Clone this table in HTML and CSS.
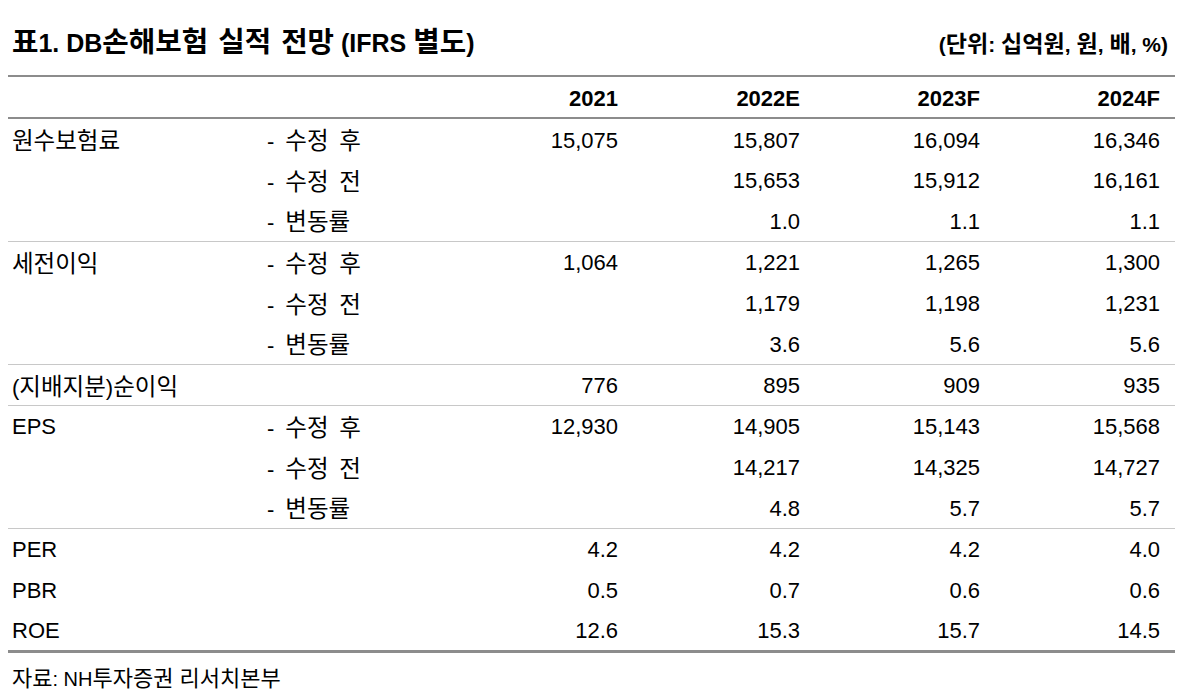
FILE: index.html
```html
<!DOCTYPE html>
<html lang="ko">
<head>
<meta charset="utf-8">
<link rel="stylesheet" href="styles.css">
</head>
<body>
<div class="page">
  <div class="titlebar">
    <h1 class="title"><span class="ko">표</span>1. DB<span class="ko">손해보험 실적 전망</span> (IFRS <span class="ko">별도</span>)</h1>
    <div class="unit">(<span class="ko">단위</span>: <span class="ko">십억원</span>, <span class="ko">원</span>, <span class="ko">배</span>, %)</div>
  </div>
  <table class="tbl">
    <colgroup>
      <col class="c1"><col class="c2"><col class="c3"><col class="c4"><col class="c5"><col class="c6">
    </colgroup>
    <thead>
      <tr><th></th><th></th><th class="num">2021</th><th class="num">2022E</th><th class="num">2023F</th><th class="num">2024F</th></tr>
    </thead>
    <tbody>
      <tr class="grp"><td><span class="ko">원수보험료</span></td><td class="sub">-<span class="ko">수정 후</span></td><td class="num">15,075</td><td class="num">15,807</td><td class="num">16,094</td><td class="num">16,346</td></tr>
      <tr><td></td><td class="sub">-<span class="ko">수정 전</span></td><td class="num"></td><td class="num">15,653</td><td class="num">15,912</td><td class="num">16,161</td></tr>
      <tr><td></td><td class="sub">-<span class="ko">변동률</span></td><td class="num"></td><td class="num">1.0</td><td class="num">1.1</td><td class="num">1.1</td></tr>
      <tr class="grp"><td><span class="ko">세전이익</span></td><td class="sub">-<span class="ko">수정 후</span></td><td class="num">1,064</td><td class="num">1,221</td><td class="num">1,265</td><td class="num">1,300</td></tr>
      <tr><td></td><td class="sub">-<span class="ko">수정 전</span></td><td class="num"></td><td class="num">1,179</td><td class="num">1,198</td><td class="num">1,231</td></tr>
      <tr><td></td><td class="sub">-<span class="ko">변동률</span></td><td class="num"></td><td class="num">3.6</td><td class="num">5.6</td><td class="num">5.6</td></tr>
      <tr class="grp"><td colspan="2">(<span class="ko">지배지분</span>)<span class="ko">순이익</span></td><td class="num">776</td><td class="num">895</td><td class="num">909</td><td class="num">935</td></tr>
      <tr class="grp"><td>EPS</td><td class="sub">-<span class="ko">수정 후</span></td><td class="num">12,930</td><td class="num">14,905</td><td class="num">15,143</td><td class="num">15,568</td></tr>
      <tr><td></td><td class="sub">-<span class="ko">수정 전</span></td><td class="num"></td><td class="num">14,217</td><td class="num">14,325</td><td class="num">14,727</td></tr>
      <tr><td></td><td class="sub">-<span class="ko">변동률</span></td><td class="num"></td><td class="num">4.8</td><td class="num">5.7</td><td class="num">5.7</td></tr>
      <tr class="grp"><td>PER</td><td></td><td class="num">4.2</td><td class="num">4.2</td><td class="num">4.2</td><td class="num">4.0</td></tr>
      <tr><td>PBR</td><td></td><td class="num">0.5</td><td class="num">0.7</td><td class="num">0.6</td><td class="num">0.6</td></tr>
      <tr><td>ROE</td><td></td><td class="num">12.6</td><td class="num">15.3</td><td class="num">15.7</td><td class="num">14.5</td></tr>
    </tbody>
  </table>
  <div class="source"><span class="ko">자료</span>: NH<span class="ko">투자증권 리서치본부</span></div>
</div>
</body>
</html>
```

FILE: styles.css
```css
html, body {
  margin: 0;
  padding: 0;
  background: #ffffff;
}
body {
  font-family: "Liberation Sans", "Noto Sans CJK KR", sans-serif;
  color: #000000;
}
.ko {
  font-family: "Noto Sans CJK KR", sans-serif;
}
.page {
  width: 1167px;
  margin-left: 8px;
}
.titlebar {
  display: flex;
  justify-content: space-between;
  align-items: flex-end;
  height: 62px;
  padding-bottom: 13px;
  box-sizing: content-box;
}
.title {
  margin: 0 0 0 4px;
  font-size: 25px;
  font-weight: bold;
  line-height: 30px;
  padding-bottom: 4px;
}
.title .ko {
  font-size: 1.15em;
  word-spacing: 2px;
}
.unit {
  font-size: 21px;
  font-weight: bold;
  line-height: 28px;
  margin-right: 7px;
  padding-bottom: 3px;
}
.unit .ko {
  font-size: 1.1em;
}
.tbl {
  width: 1167px;
  border-collapse: collapse;
  table-layout: fixed;
  font-size: 22px;
}
.c1 { width: 250px; }
.c2 { width: 195px; }
.c3 { width: 180px; }
.c4 { width: 182px; }
.c5 { width: 180px; }
.c6 { width: 180px; }
.tbl thead tr {
  height: 42px;
  border-top: 2px solid #8c8c8c;
  border-bottom: 2px solid #8c8c8c;
}
.tbl th {
  font-weight: bold;
  padding: 3px 15px 0 4px;
  line-height: 24px;
}
.tbl tbody tr {
  height: 41px;
}
.tbl tbody tr.grp {
  border-top: 1px solid #c8c8c8;
}
.tbl tbody tr:first-child {
  border-top: none;
}
.tbl tbody tr:last-child {
  border-bottom: 3px solid #8c8c8c;
}
.tbl td {
  padding: 3px 15px 0 4px;
  white-space: nowrap;
  line-height: 24px;
}
.tbl td .ko {
  font-size: 23.5px;
  word-spacing: 4px;
}
.tbl td.sub {
  padding-left: 9px;
}
.tbl td.sub .ko {
  margin-left: 11px;
}
.num {
  text-align: right;
}
.source {
  font-size: 20px;
  line-height: 28px;
  padding: 9px 0 0 4px;
}
.source .ko {
  font-size: 22px;
}
```
